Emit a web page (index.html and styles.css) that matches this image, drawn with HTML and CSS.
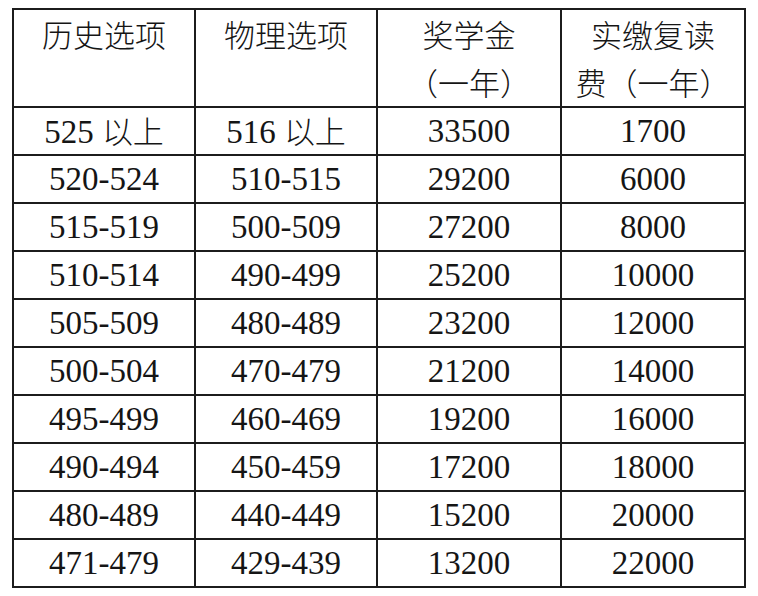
FILE: index.html
```html
<!DOCTYPE html>
<html>
<head>
<meta charset="utf-8">
<title>Table</title>
<link rel="stylesheet" href="styles.css">
</head>
<body>
<table class="grid">
  <colgroup>
    <col class="c1"><col class="c2"><col class="c3"><col class="c4">
  </colgroup>
  <thead>
    <tr>
      <th class="hd">历史选项</th>
      <th class="hd">物理选项</th>
      <th class="hd">奖学金<br>（一年）</th>
      <th class="hd">实缴复读<br>费（一年）</th>
    </tr>
  </thead>
  <tbody>
    <tr><td class="num">525 <span class="cjk">以上</span></td><td class="num">516 <span class="cjk">以上</span></td><td class="num">33500</td><td class="num">1700</td></tr>
    <tr><td class="num">520-524</td><td class="num">510-515</td><td class="num">29200</td><td class="num">6000</td></tr>
    <tr><td class="num">515-519</td><td class="num">500-509</td><td class="num">27200</td><td class="num">8000</td></tr>
    <tr><td class="num">510-514</td><td class="num">490-499</td><td class="num">25200</td><td class="num">10000</td></tr>
    <tr><td class="num">505-509</td><td class="num">480-489</td><td class="num">23200</td><td class="num">12000</td></tr>
    <tr><td class="num">500-504</td><td class="num">470-479</td><td class="num">21200</td><td class="num">14000</td></tr>
    <tr><td class="num">495-499</td><td class="num">460-469</td><td class="num">19200</td><td class="num">16000</td></tr>
    <tr><td class="num">490-494</td><td class="num">450-459</td><td class="num">17200</td><td class="num">18000</td></tr>
    <tr><td class="num">480-489</td><td class="num">440-449</td><td class="num">15200</td><td class="num">20000</td></tr>
    <tr><td class="num">471-479</td><td class="num">429-439</td><td class="num">13200</td><td class="num">22000</td></tr>
  </tbody>
</table>
</body>
</html>
```

FILE: styles.css
```css
html, body {
  margin: 0;
  padding: 0;
  background: #ffffff;
}

body {
  padding: 8px 0 0 12px;
  font-family: "Liberation Serif", serif;
}

.grid {
  border-collapse: collapse;
  table-layout: fixed;
  width: 732px;
  color: #151515;
}

.c1 { width: 182px; }
.c2 { width: 182px; }
.c3 { width: 184px; }
.c4 { width: 184px; }

.hd,
.num {
  border: 2px solid #1c1c1c;
  padding: 0;
  text-align: center;
}

.hd {
  font-family: "Noto Sans CJK SC", sans-serif;
  font-weight: 300;
  font-size: 31px;
  line-height: 48px;
  vertical-align: top;
  height: 94px;
}

.num {
  font-family: "Liberation Serif", serif;
  font-weight: normal;
  font-size: 33px;
  height: 46px;
  line-height: 30px;
  vertical-align: middle;
}

.cjk {
  font-family: "Noto Sans CJK SC", sans-serif;
  font-weight: 300;
  font-size: 31px;
  line-height: 30px;
}
```
